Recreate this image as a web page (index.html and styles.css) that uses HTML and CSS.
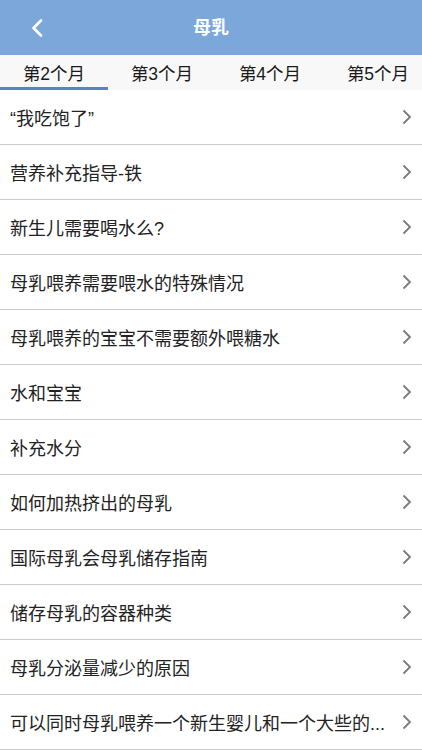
FILE: index.html
```html
<!DOCTYPE html>
<html lang="zh-CN">
<head>
<meta charset="utf-8">
<link rel="stylesheet" href="styles.css">
</head>
<body>
<div class="page">
  <header class="topbar">
    <span class="back">
      <svg width="14" height="18" viewBox="0 0 14 18"><path d="M11 1.5 L3.5 9 L11 16.5" fill="none" stroke="#fff" stroke-width="2.6" stroke-linecap="round" stroke-linejoin="round"/></svg>
    </span>
    <h1 class="title">母乳</h1>
  </header>
  <nav class="tabs">
    <div class="tab active">第2个月</div>
    <div class="tab">第3个月</div>
    <div class="tab">第4个月</div>
    <div class="tab">第5个月</div>
  </nav>
  <ul class="list">
    <li class="row"><span class="label">“我吃饱了”</span><svg class="chev" width="10" height="16" viewBox="0 0 10 16"><path d="M1.5 1.5 L8 8 L1.5 14.5" fill="none" stroke="#7a7a7a" stroke-width="1.8"/></svg></li>
    <li class="row"><span class="label">营养补充指导-铁</span><svg class="chev" width="10" height="16" viewBox="0 0 10 16"><path d="M1.5 1.5 L8 8 L1.5 14.5" fill="none" stroke="#7a7a7a" stroke-width="1.8"/></svg></li>
    <li class="row"><span class="label">新生儿需要喝水么?</span><svg class="chev" width="10" height="16" viewBox="0 0 10 16"><path d="M1.5 1.5 L8 8 L1.5 14.5" fill="none" stroke="#7a7a7a" stroke-width="1.8"/></svg></li>
    <li class="row"><span class="label">母乳喂养需要喂水的特殊情况</span><svg class="chev" width="10" height="16" viewBox="0 0 10 16"><path d="M1.5 1.5 L8 8 L1.5 14.5" fill="none" stroke="#7a7a7a" stroke-width="1.8"/></svg></li>
    <li class="row"><span class="label">母乳喂养的宝宝不需要额外喂糖水</span><svg class="chev" width="10" height="16" viewBox="0 0 10 16"><path d="M1.5 1.5 L8 8 L1.5 14.5" fill="none" stroke="#7a7a7a" stroke-width="1.8"/></svg></li>
    <li class="row"><span class="label">水和宝宝</span><svg class="chev" width="10" height="16" viewBox="0 0 10 16"><path d="M1.5 1.5 L8 8 L1.5 14.5" fill="none" stroke="#7a7a7a" stroke-width="1.8"/></svg></li>
    <li class="row"><span class="label">补充水分</span><svg class="chev" width="10" height="16" viewBox="0 0 10 16"><path d="M1.5 1.5 L8 8 L1.5 14.5" fill="none" stroke="#7a7a7a" stroke-width="1.8"/></svg></li>
    <li class="row"><span class="label">如何加热挤出的母乳</span><svg class="chev" width="10" height="16" viewBox="0 0 10 16"><path d="M1.5 1.5 L8 8 L1.5 14.5" fill="none" stroke="#7a7a7a" stroke-width="1.8"/></svg></li>
    <li class="row"><span class="label">国际母乳会母乳储存指南</span><svg class="chev" width="10" height="16" viewBox="0 0 10 16"><path d="M1.5 1.5 L8 8 L1.5 14.5" fill="none" stroke="#7a7a7a" stroke-width="1.8"/></svg></li>
    <li class="row"><span class="label">储存母乳的容器种类</span><svg class="chev" width="10" height="16" viewBox="0 0 10 16"><path d="M1.5 1.5 L8 8 L1.5 14.5" fill="none" stroke="#7a7a7a" stroke-width="1.8"/></svg></li>
    <li class="row"><span class="label">母乳分泌量减少的原因</span><svg class="chev" width="10" height="16" viewBox="0 0 10 16"><path d="M1.5 1.5 L8 8 L1.5 14.5" fill="none" stroke="#7a7a7a" stroke-width="1.8"/></svg></li>
    <li class="row"><span class="label">可以同时母乳喂养一个新生婴儿和一个大些的...</span><svg class="chev" width="10" height="16" viewBox="0 0 10 16"><path d="M1.5 1.5 L8 8 L1.5 14.5" fill="none" stroke="#7a7a7a" stroke-width="1.8"/></svg></li>
  </ul>
</div>
</body>
</html>
```
FILE: styles.css
```css
* { box-sizing: border-box; }
html, body { margin: 0; padding: 0; }
body {
  background: #ffffff;
  font-family: "Liberation Sans", "Noto Sans CJK SC", sans-serif;
  color: #222;
  overflow: hidden;
}
.page { width: 422px; height: 750px; overflow: hidden; }
.topbar {
  height: 55px;
  background: #7ba7da;
  display: flex;
  align-items: center;
  justify-content: center;
  position: relative;
}
.back {
  position: absolute;
  left: 30px;
  top: 19px;
  display: flex;
}
.title {
  margin: 0;
  font-size: 18px;
  font-weight: 700;
  color: #fff;
  line-height: 1;
}
.tabs {
  height: 35px;
  background: #f8f8f8;
  display: flex;
  overflow: hidden;
  white-space: nowrap;
}
.tab {
  flex: 0 0 108px;
  text-align: center;
  font-size: 17.5px;
  padding-top: 6px;
  line-height: 26px;
  color: #1a1a1a;
  border-bottom: 3px solid transparent;
}
.tab.active { border-bottom-color: #5d82ba; }
.list { list-style: none; margin: 0; padding: 0; }
.row {
  height: 55px;
  border-bottom: 1px solid #cbcbcb;
  display: flex;
  align-items: center;
  padding: 0 10px 0 10px;
  gap: 14px;
}
.label {
  flex: 1;
  min-width: 0;
  font-size: 18px;
  color: #222;
  white-space: nowrap;
}
.chev { flex: 0 0 auto; }
```
